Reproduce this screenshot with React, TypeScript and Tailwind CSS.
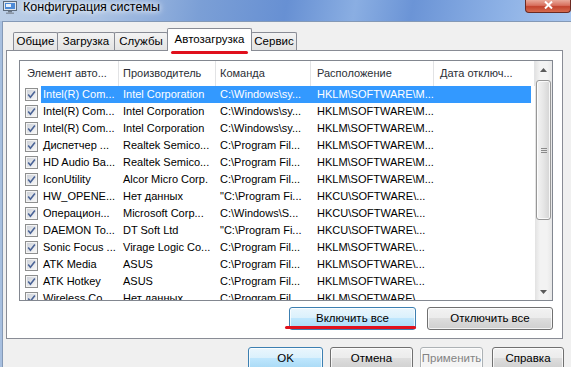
import React from 'react';

type Variant = 'normal' | 'hot' | 'disabled';

const rows: string[][] = [
  ['Intel(R) Com...', 'Intel Corporation', 'C:\\Windows\\sy...', 'HKLM\\SOFTWARE\\M...'],
  ['Intel(R) Com...', 'Intel Corporation', 'C:\\Windows\\sy...', 'HKLM\\SOFTWARE\\M...'],
  ['Intel(R) Com...', 'Intel Corporation', 'C:\\Windows\\sy...', 'HKLM\\SOFTWARE\\M...'],
  ['Диспетчер ...', 'Realtek Semico...', 'C:\\Program Fil...', 'HKLM\\SOFTWARE\\M...'],
  ['HD Audio Ba...', 'Realtek Semico...', 'C:\\Program Fil...', 'HKLM\\SOFTWARE\\M...'],
  ['IconUtility', 'Alcor Micro Corp.', 'C:\\Program Fil...', 'HKLM\\SOFTWARE\\M...'],
  ['HW_OPENE...', 'Нет данных', '"C:\\Program Fi...', 'HKCU\\SOFTWARE\\...'],
  ['Операцион...', 'Microsoft Corp...', 'C:\\Windows\\S...', 'HKCU\\SOFTWARE\\...'],
  ['DAEMON To...', 'DT Soft Ltd', '"C:\\Program Fi...', 'HKCU\\SOFTWARE\\...'],
  ['Sonic Focus ...', 'Virage Logic Co...', 'C:\\Program Fil...', 'HKLM\\SOFTWARE\\...'],
  ['ATK Media', 'ASUS', 'C:\\Program Fil...', 'HKLM\\SOFTWARE\\...'],
  ['ATK Hotkey', 'ASUS', 'C:\\Program Fil...', 'HKLM\\SOFTWARE\\...'],
  ['Wireless Co...', 'Нет данных', 'C:\\Program Fil...', 'HKLM\\SOFTWARE\\...'],
];

const tabs = [
  { label: 'Общие', w: 'w-[45px]' },
  { label: 'Загрузка', w: 'w-[58px]' },
  { label: 'Службы', w: 'w-[54px]' },
  { label: 'Автозагрузка', w: 'w-[85px]', active: true },
  { label: 'Сервис', w: 'w-[46px]' },
];

const CheckBox = () => (
  <div className="w-[13px] h-[13px] border border-[#8e8f8f] bg-[#f4f4f4] p-px shrink-0">
    <div className="w-full h-full bg-[linear-gradient(135deg,#cdd1d8,#f7f7f7)] flex items-center justify-center">
      <svg width="9" height="9" viewBox="0 0 9 9">
        <path d="M1.2 4.6 L3.4 7.2 L7.9 1.4" fill="none" stroke="#4a6396" strokeWidth="1.6" />
      </svg>
    </div>
  </div>
);

const WinButton = ({ children, variant = 'normal', className = '' }: { children: React.ReactNode; variant?: Variant; className?: string }) => {
  const look =
    variant === 'hot'
      ? 'border-[#3c7fb1] bg-[linear-gradient(#eaf6fd_0%,#d9f0fc_50%,#bee6fd_50%,#a7d9f5_100%)] text-black'
      : variant === 'disabled'
      ? 'border-[#adb2b5] bg-[#f4f4f4] text-[#838383]'
      : 'border-[#707070] bg-[linear-gradient(#f2f2f2_0%,#ebebeb_50%,#dddddd_50%,#cfcfcf_100%)] text-black';
  return (
    <div className={`relative h-[23px] border rounded-[3px] shadow-[inset_0_0_0_1px_rgba(255,255,255,0.75)] flex items-center justify-center text-[11.5px] ${look} ${className}`}>
      {children}
    </div>
  );
};

export default function App() {
  return (
    <div className="w-[571px] h-[367px] overflow-hidden bg-[#f0f0f0] flex flex-col font-['Liberation_Sans',Arial,sans-serif] text-black">
      {/* Title bar */}
      <div className="h-[21px] shrink-0 flex items-start bg-[linear-gradient(100deg,#bccfe7_0%,#aac2e3_18%,#7b9fd6_35%,#6790d3_50%,#8aaee2_62%,#6b94d6_72%,#8eb2e6_88%,#a9c6ee_100%)]">
        <svg className="ml-[3px] mt-[1px]" width="14" height="13" viewBox="0 0 14 13">
          <rect x="0.5" y="0.5" width="13" height="9" fill="#dfe6ee" stroke="#5d6b7c" />
          <rect x="2" y="2" width="10" height="6" fill="#4d8ad6" />
          <rect x="3" y="3" width="5" height="3" fill="#e9f1fb" />
          <rect x="5" y="10" width="4" height="1.5" fill="#6c7888" />
          <rect x="3" y="11.5" width="8" height="1.5" fill="#8a96a6" />
        </svg>
        <span className="ml-[6px] text-[12.5px] leading-[15px] text-black [text-shadow:0_0_5px_#fff,0_0_8px_#fff]">Конфигурация системы</span>
        <div className="ml-auto w-[46px] h-[13px] rounded-b-[4px] border border-t-0 border-[#6b2a22] bg-[linear-gradient(#e9a99a_0%,#d8705e_45%,#c3432e_55%,#d66b4f_100%)] flex items-start justify-center">
          <svg width="9" height="8" viewBox="0 0 9 8" className="mt-[1px]">
            <path d="M1 0.5 L8 7.5 M8 0.5 L1 7.5" stroke="#fff" strokeWidth="2" />
          </svg>
        </div>
      </div>

      {/* Window body */}
      <div className="flex-1 flex border-l-2 border-[#a7bfdf]">
        <div className="flex-1 flex flex-col border-l border-t border-[#8499b6]">
          {/* Tabs */}
          <div className="h-[28px] flex items-end pl-[10px] shrink-0">
            {tabs.map((t, i) =>
              t.active ? (
                <div
                  key={t.label}
                  className={`relative z-10 -ml-px -mb-px h-[23px] ${t.w} border border-b-0 border-[#898c95] rounded-t-[2px] bg-white flex items-center justify-center text-[11.5px]`}
                >
                  {t.label}
                  <div className="absolute left-[3px] right-[3px] top-[22px] h-[3px] rounded-full bg-[#e0101c]" />
                </div>
              ) : (
                <div
                  key={t.label}
                  className={`${i > 0 ? '-ml-px' : ''} h-[18px] ${t.w} border border-b-0 border-[#898c95] rounded-t-[2px] bg-[linear-gradient(#f3f3f3,#e3e3e3)] flex items-center justify-center text-[11.5px]`}
                >
                  {t.label}
                </div>
              )
            )}
          </div>

          {/* Tab panel */}
          <div className="ml-[3px] w-[557px] h-[289px] shrink-0 border border-[#898c95] bg-white pl-[12px] pt-[9px]">
            <div className="w-[534px] h-[241px] border border-[#828790] flex overflow-hidden">
              <div className="w-[515px] flex flex-col">
                {/* Header */}
                <div className="h-[25px] shrink-0 flex text-[11px] text-[#2b2f36]">
                  <div className="w-[99px] pl-[7px] flex items-center border-r border-[#e2e3e5]">Элемент авто...</div>
                  <div className="w-[97px] pl-[4px] flex items-center border-r border-[#e2e3e5]">Производитель</div>
                  <div className="w-[95px] pl-[4px] flex items-center border-r border-[#e2e3e5]">Команда</div>
                  <div className="w-[123px] pl-[6px] flex items-center border-r border-[#e2e3e5]">Расположение</div>
                  <div className="flex-1 pl-[6px] flex items-center border-r border-[#e2e3e5]">Дата отключ...</div>
                </div>
                {/* Rows */}
                {rows.map((r, i) => {
                  const sel = i === 0;
                  return (
                    <div key={i} className="h-[17px] shrink-0 flex items-center text-[11px] whitespace-nowrap">
                      <div className="w-[21px] pl-[5px] flex items-center">
                        <CheckBox />
                      </div>
                      <div className={`w-[490px] h-full flex items-center ${sel ? 'bg-[#3399ff] text-white' : ''}`}>
                        <div className="w-[78px] pl-[2px] overflow-hidden">{r[0]}</div>
                        <div className="w-[97px] pl-[4px] overflow-hidden">{r[1]}</div>
                        <div className="w-[95px] pl-[4px] overflow-hidden">{r[2]}</div>
                        <div className="w-[123px] pl-[6px] overflow-hidden">{r[3]}</div>
                      </div>
                    </div>
                  );
                })}
              </div>

              {/* Scrollbar */}
              <div className="w-[17px] flex flex-col bg-[linear-gradient(90deg,#e2e2e2,#f3f3f3_30%,#f3f3f3_70%,#e8e8e8)]">
                <div className="h-[17px] flex items-center justify-center">
                  <svg width="7" height="4" viewBox="0 0 7 4"><path d="M0 4 L3.5 0 L7 4 Z" fill="#5a5a5a" /></svg>
                </div>
                <div className="mt-[2px] mx-px h-[140px] rounded-[3px] border border-[#979797] bg-[linear-gradient(90deg,#f4f4f4,#e6e6e6_50%,#d4d4d4)] shadow-[inset_0_0_0_1px_rgba(255,255,255,0.8)] flex flex-col items-center justify-center gap-[1px]">
                  <div className="w-[6px] h-px bg-[#8a8a8a]" />
                  <div className="w-[6px] h-px bg-[#8a8a8a]" />
                  <div className="w-[6px] h-px bg-[#8a8a8a]" />
                </div>
                <div className="mt-auto h-[17px] flex items-center justify-center">
                  <svg width="7" height="4" viewBox="0 0 7 4"><path d="M0 0 L3.5 4 L7 0 Z" fill="#5a5a5a" /></svg>
                </div>
              </div>
            </div>

            <div className="mt-[6px] w-[534px] flex justify-end gap-[11px]">
              <WinButton variant="hot" className="w-[127px]">
                Включить все
                <div className="absolute left-[-5px] top-[18px] w-[131px] h-[3px] rounded-full bg-[#e0101c]" />
              </WinButton>
              <WinButton className="w-[126px]">Отключить все</WinButton>
            </div>
          </div>

          {/* Bottom buttons */}
          <div className="mt-[8px] flex justify-end pr-[7px] gap-[7px]">
            <WinButton variant="hot" className="w-[75px] border-[#2f6d9e]">OK</WinButton>
            <WinButton className="w-[83px]">Отмена</WinButton>
            <WinButton variant="disabled" className="w-[63px]">Применить</WinButton>
            <WinButton className="w-[72px] ml-[2px]">Справка</WinButton>
          </div>
        </div>
      </div>
    </div>
  );
}
